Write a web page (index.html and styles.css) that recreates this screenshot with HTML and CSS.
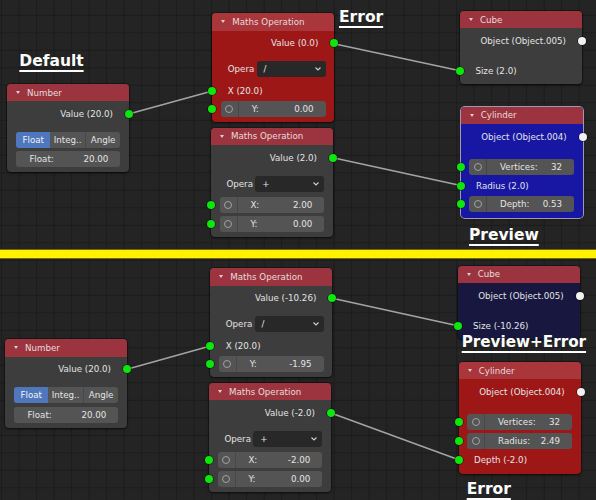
FILE: index.html
```html
<!DOCTYPE html>
<html>
<head>
<meta charset="utf-8">
<link rel="stylesheet" href="styles.css">
</head>
<body>
<div class="canvas">
  <section class="half half-top">
    <svg class="wires" width="596" height="250" viewBox="0 0 596 250">
      <line x1="128.7" y1="114" x2="212.3" y2="91"/>
      <line x1="334" y1="43.7" x2="460" y2="70.7"/>
      <line x1="333" y1="157.7" x2="460.7" y2="185.5"/>
    </svg>

    <div class="node n-number-a">
      <div class="node-head"><span class="tri"></span>Number</div>
      <div class="node-body">
        <div class="row out">Value (20.0)<span class="sock sock-r"></span></div>
        <div class="row mt-props"><div class="seg"><span class="seg-btn on">Float</span><span class="seg-btn">Integ..</span><span class="seg-btn div">Angle</span></div></div>
        <div class="row mt-3"><div class="field plain"><span class="f-label">Float:</span><span class="f-val">20.00</span></div></div>
      </div>
    </div>

    <div class="node err n-math1-a">
      <div class="node-head"><span class="tri"></span>Maths Operation</div>
      <div class="node-body">
        <div class="row out">Value (0.0)<span class="sock sock-r"></span></div>
        <div class="row mt-props opera"><span class="op-label">Opera</span><div class="dropdown"><span>/</span><svg class="chev" width="6" height="4" viewBox="0 0 6 4"><polyline points="0.5,0.5 3,3 5.5,0.5"/></svg></div></div>
        <div class="row in mt-in">X (20.0)<span class="sock sock-l"></span></div>
        <div class="row"><span class="sock sock-l"></span><div class="field"><span class="f-icon"><span class="ring"></span></span><span class="f-label">Y:</span><span class="f-val">0.00</span></div></div>
      </div>
    </div>

    <div class="node n-math2-a">
      <div class="node-head"><span class="tri"></span>Maths Operation</div>
      <div class="node-body">
        <div class="row out">Value (2.0)<span class="sock sock-r"></span></div>
        <div class="row mt-props opera"><span class="op-label">Opera</span><div class="dropdown"><span>+</span><svg class="chev" width="6" height="4" viewBox="0 0 6 4"><polyline points="0.5,0.5 3,3 5.5,0.5"/></svg></div></div>
        <div class="row mt-in"><span class="sock sock-l"></span><div class="field"><span class="f-icon"><span class="ring"></span></span><span class="f-label">X:</span><span class="f-val">2.00</span></div></div>
        <div class="row"><span class="sock sock-l"></span><div class="field"><span class="f-icon"><span class="ring"></span></span><span class="f-label">Y:</span><span class="f-val">0.00</span></div></div>
      </div>
    </div>

    <div class="node n-cube-a">
      <div class="node-head"><span class="tri"></span>Cube</div>
      <div class="node-body">
        <div class="row out">Object (Object.005)<span class="sock sock-r white"></span></div>
        <div class="row in mt-gap">Size (2.0)<span class="sock sock-l"></span></div>
      </div>
    </div>

    <div class="node blue active n-cyl-a">
      <div class="node-head"><span class="tri"></span>Cylinder</div>
      <div class="node-body tall">
        <div class="row out">Object (Object.004)<span class="sock sock-r white"></span></div>
        <div class="row mt-gap"><span class="sock sock-l"></span><div class="field"><span class="f-icon"><span class="ring"></span></span><span class="f-label">Vertices:</span><span class="f-val">32</span></div></div>
        <div class="row in">Radius (2.0)<span class="sock sock-l"></span></div>
        <div class="row"><span class="sock sock-l"></span><div class="field"><span class="f-icon"><span class="ring"></span></span><span class="f-label">Depth:</span><span class="f-val">0.53</span></div></div>
      </div>
    </div>

    <div class="label l-default">Default</div>
    <div class="label l-error-a">Error</div>
    <div class="label l-preview">Preview</div>
  </section>

  <div class="divider"></div>

  <section class="half half-bottom">
    <svg class="wires" width="596" height="242" viewBox="0 0 596 242">
      <line x1="127" y1="111.3" x2="210.3" y2="88"/>
      <line x1="332.3" y1="40.3" x2="457.7" y2="67.7"/>
      <line x1="331" y1="155" x2="458.7" y2="201.7"/>
    </svg>

    <div class="node n-number-b">
      <div class="node-head"><span class="tri"></span>Number</div>
      <div class="node-body">
        <div class="row out">Value (20.0)<span class="sock sock-r"></span></div>
        <div class="row mt-props"><div class="seg"><span class="seg-btn on">Float</span><span class="seg-btn">Integ..</span><span class="seg-btn div">Angle</span></div></div>
        <div class="row mt-3"><div class="field plain"><span class="f-label">Float:</span><span class="f-val">20.00</span></div></div>
      </div>
    </div>

    <div class="node n-math1-b">
      <div class="node-head"><span class="tri"></span>Maths Operation</div>
      <div class="node-body">
        <div class="row out">Value (-10.26)<span class="sock sock-r"></span></div>
        <div class="row mt-props opera"><span class="op-label">Opera</span><div class="dropdown"><span>/</span><svg class="chev" width="6" height="4" viewBox="0 0 6 4"><polyline points="0.5,0.5 3,3 5.5,0.5"/></svg></div></div>
        <div class="row in mt-in">X (20.0)<span class="sock sock-l"></span></div>
        <div class="row"><span class="sock sock-l"></span><div class="field"><span class="f-icon"><span class="ring"></span></span><span class="f-label">Y:</span><span class="f-val">-1.95</span></div></div>
      </div>
    </div>

    <div class="node n-math2-b">
      <div class="node-head"><span class="tri"></span>Maths Operation</div>
      <div class="node-body">
        <div class="row out">Value (-2.0)<span class="sock sock-r"></span></div>
        <div class="row mt-props opera"><span class="op-label">Opera</span><div class="dropdown"><span>+</span><svg class="chev" width="6" height="4" viewBox="0 0 6 4"><polyline points="0.5,0.5 3,3 5.5,0.5"/></svg></div></div>
        <div class="row mt-in"><span class="sock sock-l"></span><div class="field"><span class="f-icon"><span class="ring"></span></span><span class="f-label">X:</span><span class="f-val">-2.00</span></div></div>
        <div class="row"><span class="sock sock-l"></span><div class="field"><span class="f-icon"><span class="ring"></span></span><span class="f-label">Y:</span><span class="f-val">0.00</span></div></div>
      </div>
    </div>

    <div class="node navy n-cube-b">
      <div class="node-head"><span class="tri"></span>Cube</div>
      <div class="node-body">
        <div class="row out">Object (Object.005)<span class="sock sock-r white"></span></div>
        <div class="row in mt-gap">Size (-10.26)<span class="sock sock-l"></span></div>
      </div>
    </div>

    <div class="node err n-cyl-b">
      <div class="node-head"><span class="tri"></span>Cylinder</div>
      <div class="node-body tall">
        <div class="row out">Object (Object.004)<span class="sock sock-r white"></span></div>
        <div class="row mt-gap"><span class="sock sock-l"></span><div class="field"><span class="f-icon"><span class="ring"></span></span><span class="f-label">Vertices:</span><span class="f-val">32</span></div></div>
        <div class="row"><span class="sock sock-l"></span><div class="field"><span class="f-icon"><span class="ring"></span></span><span class="f-label">Radius:</span><span class="f-val">2.49</span></div></div>
        <div class="row in">Depth (-2.0)<span class="sock sock-l"></span></div>
      </div>
    </div>

    <div class="label l-preverr">Preview+Error</div>
    <div class="label l-error-b">Error</div>
  </section>
</div>
</body>
</html>
```

FILE: styles.css
```css
* { box-sizing: border-box; }
html, body { margin: 0; padding: 0; background: #232323; }

.canvas {
  width: 596px;
  height: 500px;
  display: flex;
  flex-direction: column;
  overflow: hidden;
  background-color: #242424;
  background-image:
    linear-gradient(to right, #1b1b1b 1px, transparent 1px),
    linear-gradient(to bottom, #1b1b1b 1px, transparent 1px);
  background-size: 17.5px 17.5px;
  background-position: 1.2px 14.8px;
  font-family: "DejaVu Sans", "Liberation Sans", sans-serif;
  font-size: 8.7px;
  color: #e4e4e4;
}

.half { position: relative; flex: none; }
.half-top { height: 250px; }
.half-bottom { height: 242px; }

.divider {
  flex: none;
  height: 8px;
  background: #fff200;
  box-shadow: 0 0 0 0.5px #b8ad00;
}

.wires { position: absolute; left: 0; top: 0; }
.wires line { stroke: #a4a4a4; stroke-width: 1.5; stroke-linecap: round; }

/* nodes */
.node {
  position: absolute;
  width: 122px;
  border-radius: 4px;
  background: #3d3d3d;
  box-shadow: 0 1px 3px rgba(0, 0, 0, 0.55), 0 0 0 0.5px rgba(0, 0, 0, 0.6);
}
.node.err { background: #9e1717; }
.node.blue { background: #1717a4; }
.node.navy { background: #17173f; }
.node.active { box-shadow: 0 0 0 1px #9c9cb0, 0 1px 3px rgba(0, 0, 0, 0.55); }

.node-head {
  height: 17.3px;
  border-radius: 4px 4px 0 0;
  background: #9c3440;
  display: flex;
  align-items: center;
  padding-left: 9px;
  color: #e6dcdc;
  white-space: nowrap;
}
.node.err .node-head { background: #a9363b; }

.tri {
  width: 0;
  height: 0;
  border-left: 2.2px solid transparent;
  border-right: 2.2px solid transparent;
  border-top: 3.6px solid #ddd0d0;
  margin-right: 7px;
  flex: none;
}

.node-body {
  padding: 4.7px 0 5px;
  display: flex;
  flex-direction: column;
}
.node-body.tall { padding-bottom: 6px; }

.row {
  position: relative;
  height: 16px;
  display: flex;
  align-items: center;
  white-space: nowrap;
  flex: none;
}
.row + .row { margin-top: 2.7px; }
.row.mt-props { margin-top: 10px; }
.row.mt-in { margin-top: 5.5px; }
.row.mt-gap { margin-top: 14.3px; }
.row.mt-3 { margin-top: 3.3px; }

.out { justify-content: flex-end; padding-right: 16px; }
.in { padding-left: 15.4px; }

/* sockets */
.sock {
  position: absolute;
  top: 4px;
  width: 8px;
  height: 8px;
  border-radius: 50%;
  background: #0be60b;
  box-shadow: 0 0 0 0.6px rgba(0, 0, 0, 0.7);
}
.sock-l { left: -4px; }
.sock-r { right: -4px; }
.sock.white { background: #f2f2f2; }

/* fields */
.field {
  flex: 1;
  margin: 0 8.7px;
  height: 16px;
  background: #545454;
  border-radius: 3px;
  display: flex;
  align-items: center;
}
.f-icon {
  flex: none;
  width: 18px;
  height: 16px;
  border-right: 1px solid #474747;
  display: flex;
  align-items: center;
  justify-content: center;
}
.ring {
  width: 8px;
  height: 8px;
  border-radius: 50%;
  border: 1px solid #a2a2a2;
}
.f-label { padding-left: 12.7px; }
.field.plain .f-label { padding-left: 13.7px; }
.f-val { margin-left: auto; padding-right: 12px; }

.seg {
  flex: 1;
  margin: 0 8.7px 0 9px;
  height: 16px;
  background: #545454;
  border-radius: 3px;
  display: flex;
  overflow: hidden;
}
.seg-btn {
  flex: 1;
  display: flex;
  align-items: center;
  justify-content: center;
}
.seg-btn.on { background: #4f77bd; color: #f2f2f2; }
.seg-btn.div { border-left: 1px solid #474747; }

.opera { padding-left: 15.4px; }
.op-label { flex: none; }
.dropdown {
  margin-left: auto;
  margin-right: 8.7px;
  width: 69px;
  height: 16px;
  background: #282828;
  border-radius: 3px;
  display: flex;
  align-items: center;
  padding: 0 5px 0 7px;
}
.chev { margin-left: auto; }
.chev polyline { fill: none; stroke: #d0d0d0; stroke-width: 1.1; }

/* node positions on the canvas */
.n-number-a { left: 7px; top: 84px; }
.n-math1-a { left: 212.3px; top: 13.3px; }
.n-math2-a { left: 211px; top: 127.7px; }
.n-cube-a { left: 460px; top: 11px; }
.n-cyl-a { left: 460.7px; top: 106.7px; }

.n-number-b { left: 5px; top: 81.3px; }
.n-math1-b { left: 210.3px; top: 10.3px; }
.n-math2-b { left: 209px; top: 125px; }
.n-cube-b { left: 457.7px; top: 7.7px; }
.n-cyl-b { left: 458.7px; top: 104px; }

/* annotation labels */
.label {
  position: absolute;
  font-family: "DejaVu Sans", "Liberation Sans", sans-serif;
  font-weight: bold;
  font-size: 15.5px;
  line-height: 18px;
  color: #ffffff;
  text-decoration: underline;
  text-decoration-thickness: 2px;
  text-underline-offset: 3.5px;
  white-space: nowrap;
}
.l-default { left: 19.3px; top: 52px; }
.l-error-a { left: 339px; top: 7.6px; }
.l-preview { left: 469px; top: 226.2px; }
.l-preverr { left: 461.7px; top: 75px; font-size: 15.2px; }
.l-error-b { left: 466.7px; top: 222.2px; }
```
